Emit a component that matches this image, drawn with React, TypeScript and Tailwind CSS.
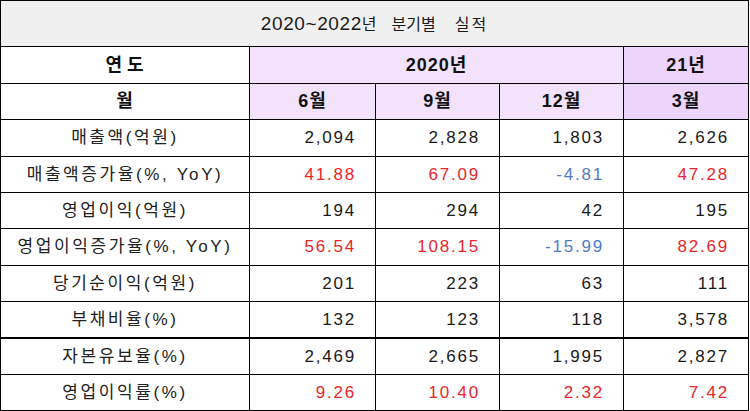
import React from "react";

type Tone = "plain" | "up" | "down";

interface Row {
  label: string;
  values: string[];
  tones?: Tone[];
  height: string;
  thickTop?: boolean;
}

const toneClass: Record<Tone, string> = {
  plain: "text-[#1a1a1a]",
  up: "text-[#e8262b]",
  down: "text-[#4f7cc2]",
};

const rows: Row[] = [
  { label: "매출액(억원)", values: ["2,094", "2,828", "1,803", "2,626"], height: "h-[37px]" },
  {
    label: "매출액증가율(%, YoY)",
    values: ["41.88", "67.09", "-4.81", "47.28"],
    tones: ["up", "up", "down", "up"],
    height: "h-[36px]",
  },
  { label: "영업이익(억원)", values: ["194", "294", "42", "195"], height: "h-[36px]" },
  {
    label: "영업이익증가율(%, YoY)",
    values: ["56.54", "108.15", "-15.99", "82.69"],
    tones: ["up", "up", "down", "up"],
    height: "h-[37px]",
  },
  { label: "당기순이익(억원)", values: ["201", "223", "63", "111"], height: "h-[36px]" },
  { label: "부채비율(%)", values: ["132", "123", "118", "3,578"], height: "h-[36px]" },
  { label: "자본유보율(%)", values: ["2,469", "2,665", "1,995", "2,827"], height: "h-[37px]", thickTop: true },
  {
    label: "영업이익률(%)",
    values: ["9.26", "10.40", "2.32", "7.42"],
    tones: ["up", "up", "up", "up"],
    height: "h-[36px]",
  },
];

const font = "font-['Liberation_Sans','Noto_Sans_CJK_KR',sans-serif]";

export default function App() {
  return (
    <div className={`w-[750px] h-[411px] bg-white ${font}`}>
      <table className="w-[749px] table-fixed border-collapse border border-black">
        <colgroup>
          <col className="w-[249px]" />
          <col className="w-[126px]" />
          <col className="w-[124px]" />
          <col className="w-[124px]" />
          <col className="w-[125px]" />
        </colgroup>
        <tbody>
          {/* Title */}
          <tr className="h-[46px] bg-[#f0f0f0]">
            <td colSpan={5} className="border-b border-black text-center text-[16px] text-[#1a1a1a] pt-[1px]">
              <span className="text-[19px] tracking-[0.6px]">2020~2022</span>
              <span>년</span>
              <span className="ml-[15px]">분기별</span>
              <span className="ml-[19px] tracking-[2px]">실적</span>
            </td>
          </tr>

          {/* Year header */}
          <tr className="h-[37px] text-[18px] font-bold text-[#111] tracking-[1px]">
            <td className="border border-black bg-white text-center tracking-[5px] pl-[4px]">연도</td>
            <td colSpan={3} className="border border-black bg-[#f3e2fb] text-center">
              2020년
            </td>
            <td className="border border-black bg-[#edd4fa] text-center">21년</td>
          </tr>

          {/* Month header */}
          <tr className="h-[36px] text-[18px] font-bold text-[#111] tracking-[1px]">
            <td className="border border-black bg-white text-center">월</td>
            <td className="border border-black bg-[#f3e2fb] text-center">6월</td>
            <td className="border border-black bg-[#f3e2fb] text-center">9월</td>
            <td className="border border-black bg-[#f3e2fb] text-center">12월</td>
            <td className="border border-black bg-[#edd4fa] text-center">3월</td>
          </tr>

          {/* Data */}
          {rows.map((row) => (
            <tr key={row.label} className={`${row.height} text-[17px]`}>
              <td
                className={`border border-black text-center text-[#222] tracking-[2.6px] ${
                  row.thickTop ? "border-t-2" : ""
                }`}
              >
                {row.label}
              </td>
              {row.values.map((v, i) => (
                <td
                  key={i}
                  className={`border border-black text-right pr-[19px] tracking-[1.8px] ${
                    toneClass[row.tones?.[i] ?? "plain"]
                  } ${row.thickTop ? "border-t-2" : ""}`}
                >
                  {v}
                </td>
              ))}
            </tr>
          ))}
        </tbody>
      </table>
    </div>
  );
}
